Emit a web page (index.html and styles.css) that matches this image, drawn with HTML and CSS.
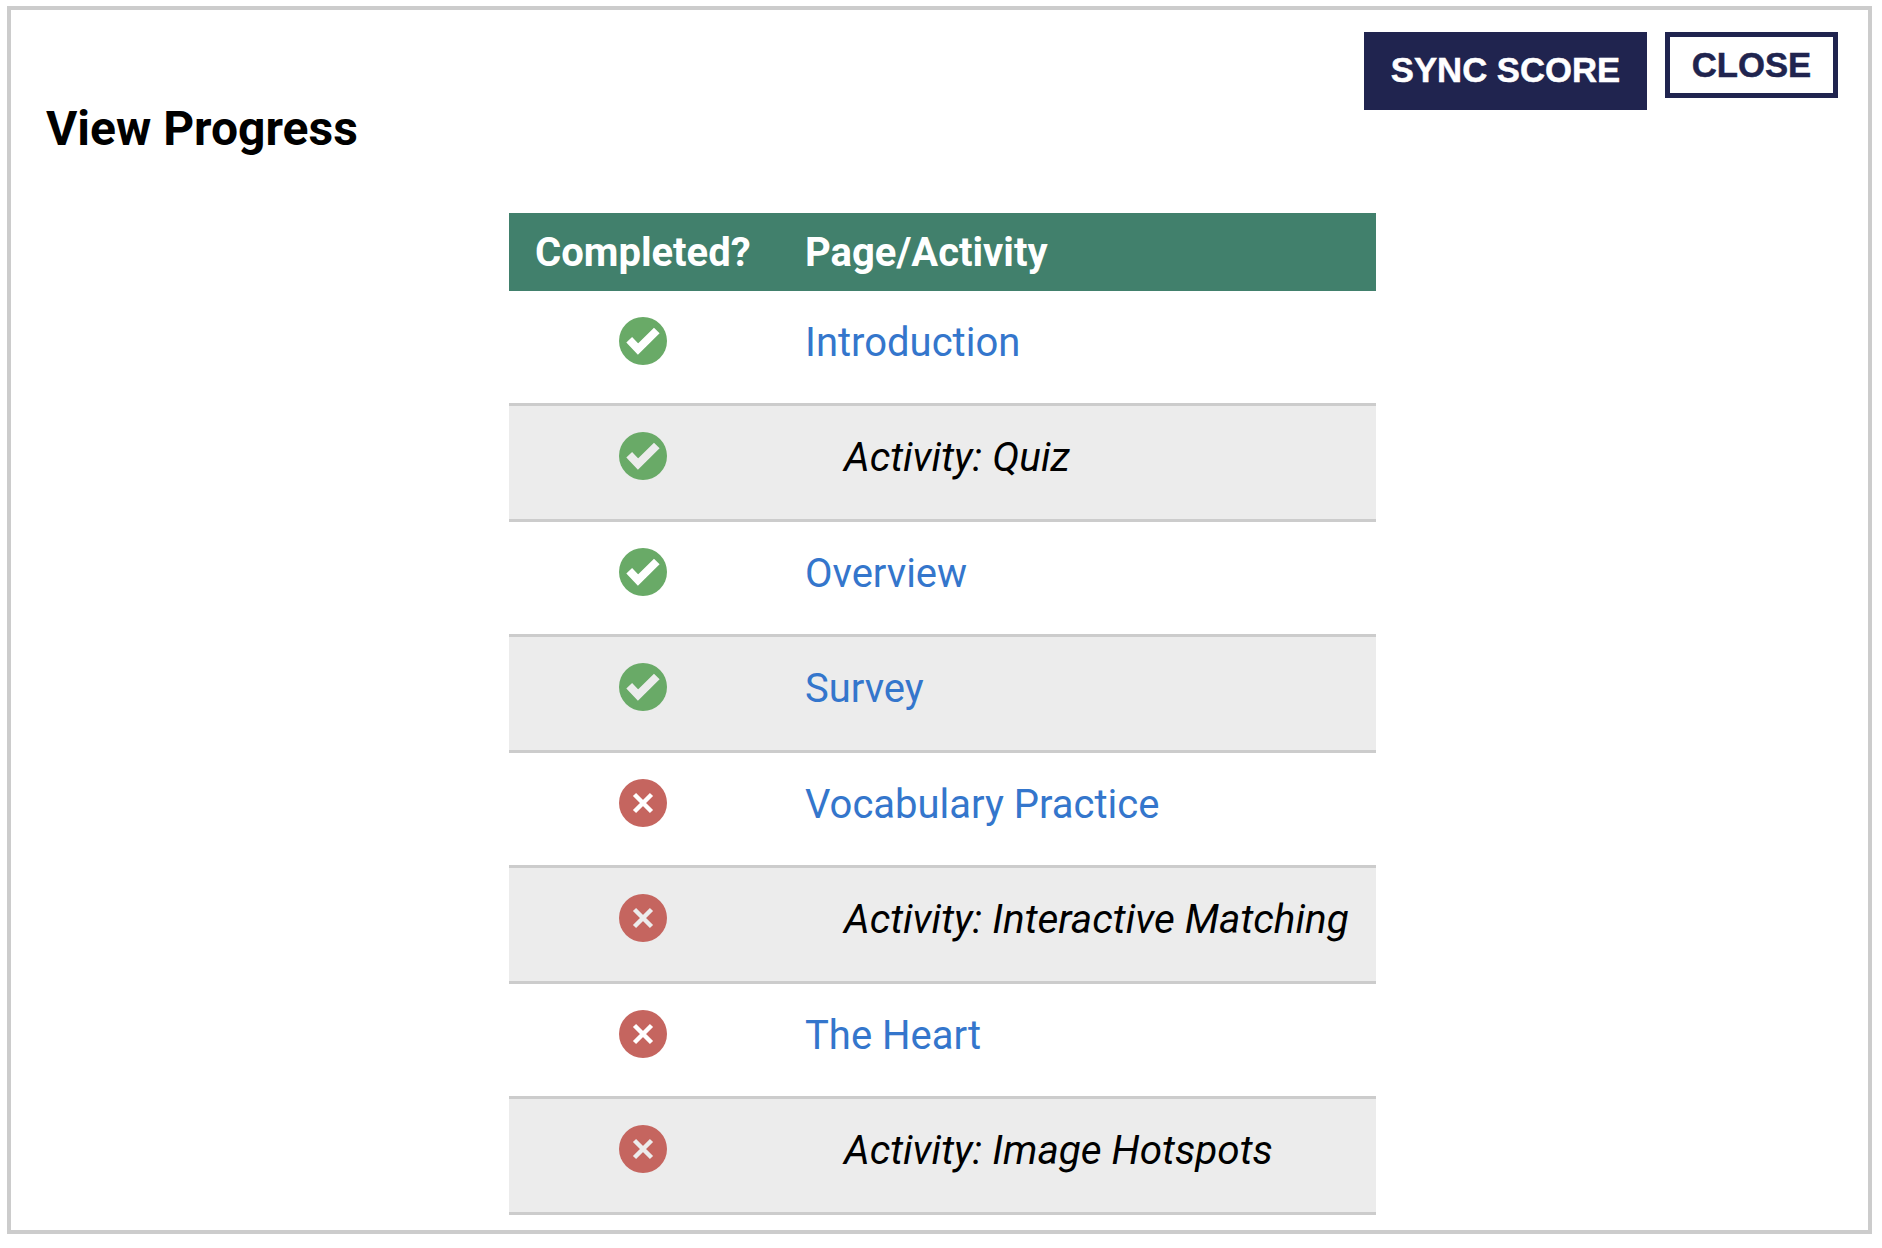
FILE: index.html
```html
<!DOCTYPE html>
<html lang="en">
<head>
    <meta charset="UTF-8">
    <meta name="viewport" content="width=device-width, initial-scale=1.0">
    <title>View Progress</title>
    <link rel="stylesheet" href="styles.css">
</head>
<body>
    <div class="modal">
        <div class="top">
            <h1>View Progress</h1>
            <div class="buttons">
                <button class="btn sync">SYNC SCORE</button>
                <button class="btn close">CLOSE</button>
            </div>
        </div>
        <table class="progress">
            <thead>
                <tr>
                    <th class="col-done">Completed?</th>
                    <th>Page/Activity</th>
                </tr>
            </thead>
            <tbody>
                <tr>
                    <td class="col-done"><svg class="icon" viewBox="0 0 48 48"><circle cx="24" cy="24" r="24" fill="#69aa67"/><path d="M10.200 22.800l8.800 9.200 18.800-18.500" fill="none" stroke="currentColor" stroke-width="8"/></svg></td>
                    <td><a href="#">Introduction</a></td>
                </tr>
                <tr>
                    <td class="col-done"><svg class="icon" viewBox="0 0 48 48"><circle cx="24" cy="24" r="24" fill="#69aa67"/><path d="M10.200 22.800l8.800 9.200 18.800-18.500" fill="none" stroke="currentColor" stroke-width="8"/></svg></td>
                    <td class="activity">Activity: Quiz</td>
                </tr>
                <tr>
                    <td class="col-done"><svg class="icon" viewBox="0 0 48 48"><circle cx="24" cy="24" r="24" fill="#69aa67"/><path d="M10.200 22.800l8.800 9.200 18.800-18.500" fill="none" stroke="currentColor" stroke-width="8"/></svg></td>
                    <td><a href="#">Overview</a></td>
                </tr>
                <tr>
                    <td class="col-done"><svg class="icon" viewBox="0 0 48 48"><circle cx="24" cy="24" r="24" fill="#69aa67"/><path d="M10.200 22.800l8.800 9.200 18.800-18.500" fill="none" stroke="currentColor" stroke-width="8"/></svg></td>
                    <td><a href="#">Survey</a></td>
                </tr>
                <tr>
                    <td class="col-done"><svg class="icon" viewBox="0 0 48 48"><circle cx="24" cy="24" r="24" fill="#c5655f"/><path d="M15.500 15.500l17 17M32.500 15.500l-17 17" fill="none" stroke="currentColor" stroke-width="4.500"/></svg></td>
                    <td><a href="#">Vocabulary Practice</a></td>
                </tr>
                <tr>
                    <td class="col-done"><svg class="icon" viewBox="0 0 48 48"><circle cx="24" cy="24" r="24" fill="#c5655f"/><path d="M15.500 15.500l17 17M32.500 15.500l-17 17" fill="none" stroke="currentColor" stroke-width="4.500"/></svg></td>
                    <td class="activity">Activity: Interactive Matching</td>
                </tr>
                <tr>
                    <td class="col-done"><svg class="icon" viewBox="0 0 48 48"><circle cx="24" cy="24" r="24" fill="#c5655f"/><path d="M15.500 15.500l17 17M32.500 15.500l-17 17" fill="none" stroke="currentColor" stroke-width="4.500"/></svg></td>
                    <td><a href="#">The Heart</a></td>
                </tr>
                <tr>
                    <td class="col-done"><svg class="icon" viewBox="0 0 48 48"><circle cx="24" cy="24" r="24" fill="#c5655f"/><path d="M15.500 15.500l17 17M32.500 15.500l-17 17" fill="none" stroke="currentColor" stroke-width="4.500"/></svg></td>
                    <td class="activity">Activity: Image Hotspots</td>
                </tr>
            </tbody>
        </table>
    </div>
</body>
</html>
```

FILE: styles.css
```css
body{
    margin: 0;
    padding: 6px 10px 14px 7px;
    background-color: #fff;
    font-family: "Roboto", "Liberation Sans", sans-serif;
}
.modal{
    height: 1228px;
    box-sizing: border-box;
    border: 4px solid #ccc;
    padding: 22px 30px 0 35px;
}
.top{
    display: flex;
    justify-content: space-between;
    align-items: flex-start;
    height: 181px;
}
h1{
    margin: 69px 0 0;
    font-size: 48px;
    line-height: 56px;
    font-weight: 700;
    color: #000;
}
.buttons{
    display: flex;
    align-items: flex-start;
    gap: 18px;
}
.btn{
    font-family: "Liberation Sans", sans-serif;
    font-size: 34.700px;
    font-weight: 700;
    -webkit-text-stroke: 0.5px;
    border: 5px solid #20244f;
    border-radius: 0;
    padding: 0;
}
.sync{
    width: 283px;
    height: 78px;
    padding-bottom: 2px;
    background-color: #20244f;
    color: #fff;
}
.close{
    width: 173px;
    height: 66px;
    background-color: #fff;
    color: #20244f;
}
.progress{
    width: 867px;
    margin-left: 463px;
    border-collapse: separate;
    border-spacing: 0;
    table-layout: fixed;
    font-size: 40px;
}
.progress th{
    height: 78px;
    padding: 0 27px;
    background-color: #41806c;
    color: #fff;
    font-size: 40px;
    font-weight: 700;
    text-align: left;
}
.progress td{
    height: 115px;
    box-sizing: border-box;
    padding: 26px 27px 0;
    border-bottom: 3px solid #ccc;
    vertical-align: top;
    line-height: 52px;
}
.progress tbody tr:nth-child(even) td{
    height: 116px;
    background-color: #ececec;
}
.progress tbody tr:nth-child(even){
    color: #ececec;
}
.progress tbody tr:nth-child(odd){
    color: #fff;
}
.progress th.col-done{
    width: 215px;
    padding: 0 28px 0 26px;
}
.progress td.col-done{
    padding: 26px 28px 0 26px;
    text-align: center;
}
.progress a{
    color: #3476cc;
    text-decoration: none;
}
.progress tbody .activity{
    padding-top: 25px;
    padding-left: 66px;
    font-style: italic;
    font-size: 40.500px;
    color: #000;
}
.icon{
    display: block;
    width: 48px;
    height: 48px;
    margin: 0 auto;
}
```
